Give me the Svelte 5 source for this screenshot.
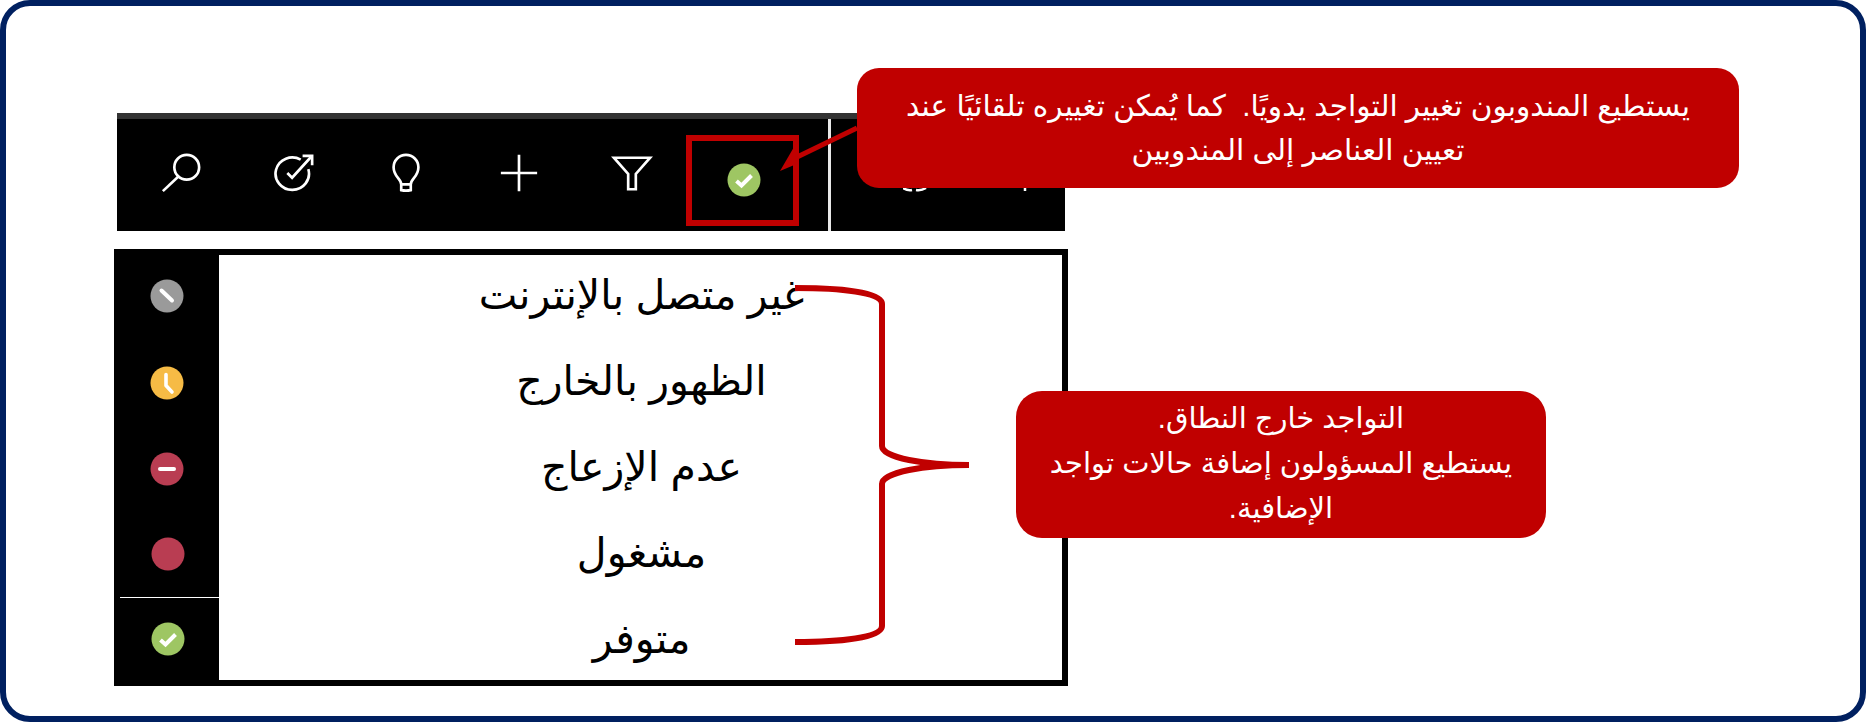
<script>
	// presence states, top to bottom
	const states = [
		{ label: 'غير متصل بالإنترنت', kind: 'offline' },
		{ label: 'الظهور بالخارج', kind: 'away' },
		{ label: 'عدم الإزعاج', kind: 'dnd' },
		{ label: 'مشغول', kind: 'busy' },
		{ label: 'متوفر', kind: 'free' }
	];
</script>

{#snippet dot(kind)}
	<svg class="dot" viewBox="0 0 34 34" aria-hidden="true">
		{#if kind === 'offline'}
			<circle cx="17" cy="17" r="16.5" fill="#9a9a9a" />
			<path d="M11.5 11.5 L22 21.5" stroke="#fff" stroke-width="4" stroke-linecap="round" />
		{:else if kind === 'away'}
			<circle cx="17" cy="17" r="16.5" fill="#f6bb45" />
			<path d="M16 8.5 V19.5 L22 26" fill="none" stroke="#fff" stroke-width="3.6" stroke-linecap="round" stroke-linejoin="round" />
		{:else if kind === 'dnd'}
			<circle cx="17" cy="17" r="16.5" fill="#b93d52" />
			<path d="M10 17 H24" stroke="#fff" stroke-width="4" stroke-linecap="round" />
		{:else if kind === 'busy'}
			<circle cx="17" cy="17" r="16.5" fill="#b93d52" />
		{:else}
			<circle cx="17" cy="17" r="16.5" fill="#9ec663" />
			<path d="M9.5 18 L14.5 22.5 L24.5 12.5" fill="none" stroke="#fff" stroke-width="4" />
		{/if}
	</svg>
{/snippet}

<div class="frame">
	<div class="toolbar">
		<div class="tool">
			<svg viewBox="0 0 44 44"><circle cx="28" cy="16" r="13" /><path d="M19 26 L3 41" /></svg>
		</div>
		<div class="tool">
			<svg viewBox="0 0 44 44"><path d="M29 8 A17.5 17 0 1 0 37 18" /><path d="M15 22 L20 27 L40 5" /><path d="M31 4 H41 V14" /></svg>
		</div>
		<div class="tool">
			<svg viewBox="0 0 44 44"><path d="M17 40 V34 C17 28 9 26 9 16 A13 13 0 0 1 35 16 C35 26 27 28 27 34 V40 Q22 41 17 40 Z" /><path d="M17 34 H27" /></svg>
		</div>
		<div class="tool">
			<svg viewBox="0 0 44 44"><path d="M3 22 H41 M22 3 V41" /></svg>
		</div>
		<div class="tool">
			<svg viewBox="0 0 44 44"><path d="M3 6 H41 L26 23 V39 H18 V23 Z" /></svg>
		</div>
		<div class="tool current">
			<div class="marker">{@render dot('free')}</div>
		</div>
		<div class="divider"></div>
		<!-- what is left of the next icons below the callout -->
		<svg class="rest" viewBox="0 0 125 6" aria-hidden="true">
			<path d="M0 1 Q5 4 9 3 M13 3 Q18 4 23 1 M122 0 V4" fill="none" stroke="#fff" stroke-width="2.5" />
		</svg>
	</div>

	<div class="panel">
		<div class="icons">
			{#each states as s}
				<div class="icon {s.kind}">{@render dot(s.kind)}</div>
			{/each}
		</div>
		<div class="labels">
			{#each states as s}
				<div class="label">{s.label}</div>
			{/each}
		</div>
	</div>

	<!-- annotations drawn over the screenshot -->
	<svg class="notes" viewBox="0 0 1866 722">
		<path d="M857 128 L795 158" stroke="#c00000" stroke-width="5" fill="none" />
		<path d="M780 171 L794 147 L799 163 Z" fill="#c00000" />
		<path d="M795 288 C840 288 882 292 882 304 V446 C882 458 925 465 969 465 C925 465 882 472 882 484 V626 C882 638 840 642 795 642" fill="none" stroke="#c00000" stroke-width="6" />
	</svg>

	<div class="callout top">يستطيع المندوبون تغيير التواجد يدويًا.&nbsp; كما يُمكن تغييره تلقائيًا عند تعيين العناصر إلى المندوبين</div>
	<div class="callout side">التواجد خارج النطاق.<br />يستطيع المسؤولون إضافة حالات تواجد الإضافية.</div>
</div>

<style>
	:global(body) {
		margin: 0;
		background: #fff;
	}

	.frame {
		position: relative;
		box-sizing: border-box;
		width: 1866px;
		height: 722px;
		padding: 107px 0 0 108px;
		border: 6px solid #002060;
		border-radius: 30px;
		background: #fff;
		overflow: hidden;
		font-family: "Liberation Sans", "DejaVu Sans", sans-serif;
	}

	.toolbar {
		display: flex;
		box-sizing: border-box;
		width: 948px;
		height: 118px;
		margin-left: 3px;
		padding-left: 8px;
		background: #000;
		border-top: 6px solid #333;
	}

	.tool {
		display: flex;
		flex: none;
		align-items: center;
		justify-content: center;
		width: 112.6px;
		height: 106px;
	}

	.tool svg {
		width: 42px;
		height: 42px;
		margin-top: 2px;
		fill: none;
		stroke: #fff;
		stroke-width: 2.8;
	}

	.marker {
		display: flex;
		align-items: center;
		justify-content: center;
		box-sizing: border-box;
		flex: none;
		width: 113px;
		height: 91px;
		margin-top: 16px;
		margin-left: -4px;
		padding-left: 4px;
		border: 6px solid #c00000;
	}

	.tool .marker :global(svg.dot) {
		width: 34px;
		height: 34px;
		margin: 0;
		stroke: none;
	}

	.divider {
		flex: none;
		width: 3px;
		height: 112px;
		margin-left: 27px;
		background: #e8e8e8;
	}

	.rest {
		flex: none;
		width: 125px;
		height: 6px;
		margin: 68px 0 0 72px;
	}

	.panel {
		display: flex;
		box-sizing: border-box;
		width: 954px;
		height: 437px;
		margin-top: 18px;
		background: #fff;
		border: 6px solid #000;
		border-left: 0;
	}

	.icons {
		flex: none;
		width: 105px;
		background: #000;
	}

	.icon {
		display: flex;
		align-items: center;
		justify-content: center;
		box-sizing: border-box;
		height: 85px;
	}

	.offline .dot {
		margin-bottom: 4px;
	}

	.dnd .dot, .busy .dot, .free .dot {
		margin-top: 2px;
	}

	.busy, .free {
		padding-left: 3px;
	}

	.free {
		position: relative;
	}

	.free::before {
		content: "";
		position: absolute;
		top: 2px;
		right: 0;
		left: 6px;
		height: 1px;
		background: #fff;
	}

	.dot {
		width: 34px;
		height: 34px;
	}

	.labels {
		flex: 1;
		margin-top: -3px;
		padding-left: 2px;
	}

	.label {
		font-size: 41px;
		line-height: 86px;
		text-align: center;
		color: #000;
		direction: rtl;
	}

	.notes {
		position: absolute;
		top: -6px;
		left: -6px;
		width: 1866px;
		height: 722px;
		pointer-events: none;
	}

	.callout {
		position: absolute;
		box-sizing: border-box;
		background: #c00000;
		color: #fff;
		text-align: center;
		direction: rtl;
	}

	.top {
		display: flex;
		align-items: center;
		justify-content: center;
		top: 62px;
		left: 851px;
		width: 882px;
		height: 120px;
		padding: 0 30px;
		border-radius: 22px;
		font-size: 29.6px;
		line-height: 44px;
	}

	.side {
		top: 385px;
		left: 1010px;
		width: 530px;
		height: 147px;
		padding: 5px 16px 0;
		border-radius: 26px;
		font-size: 29px;
		line-height: 45px;
	}
</style>
